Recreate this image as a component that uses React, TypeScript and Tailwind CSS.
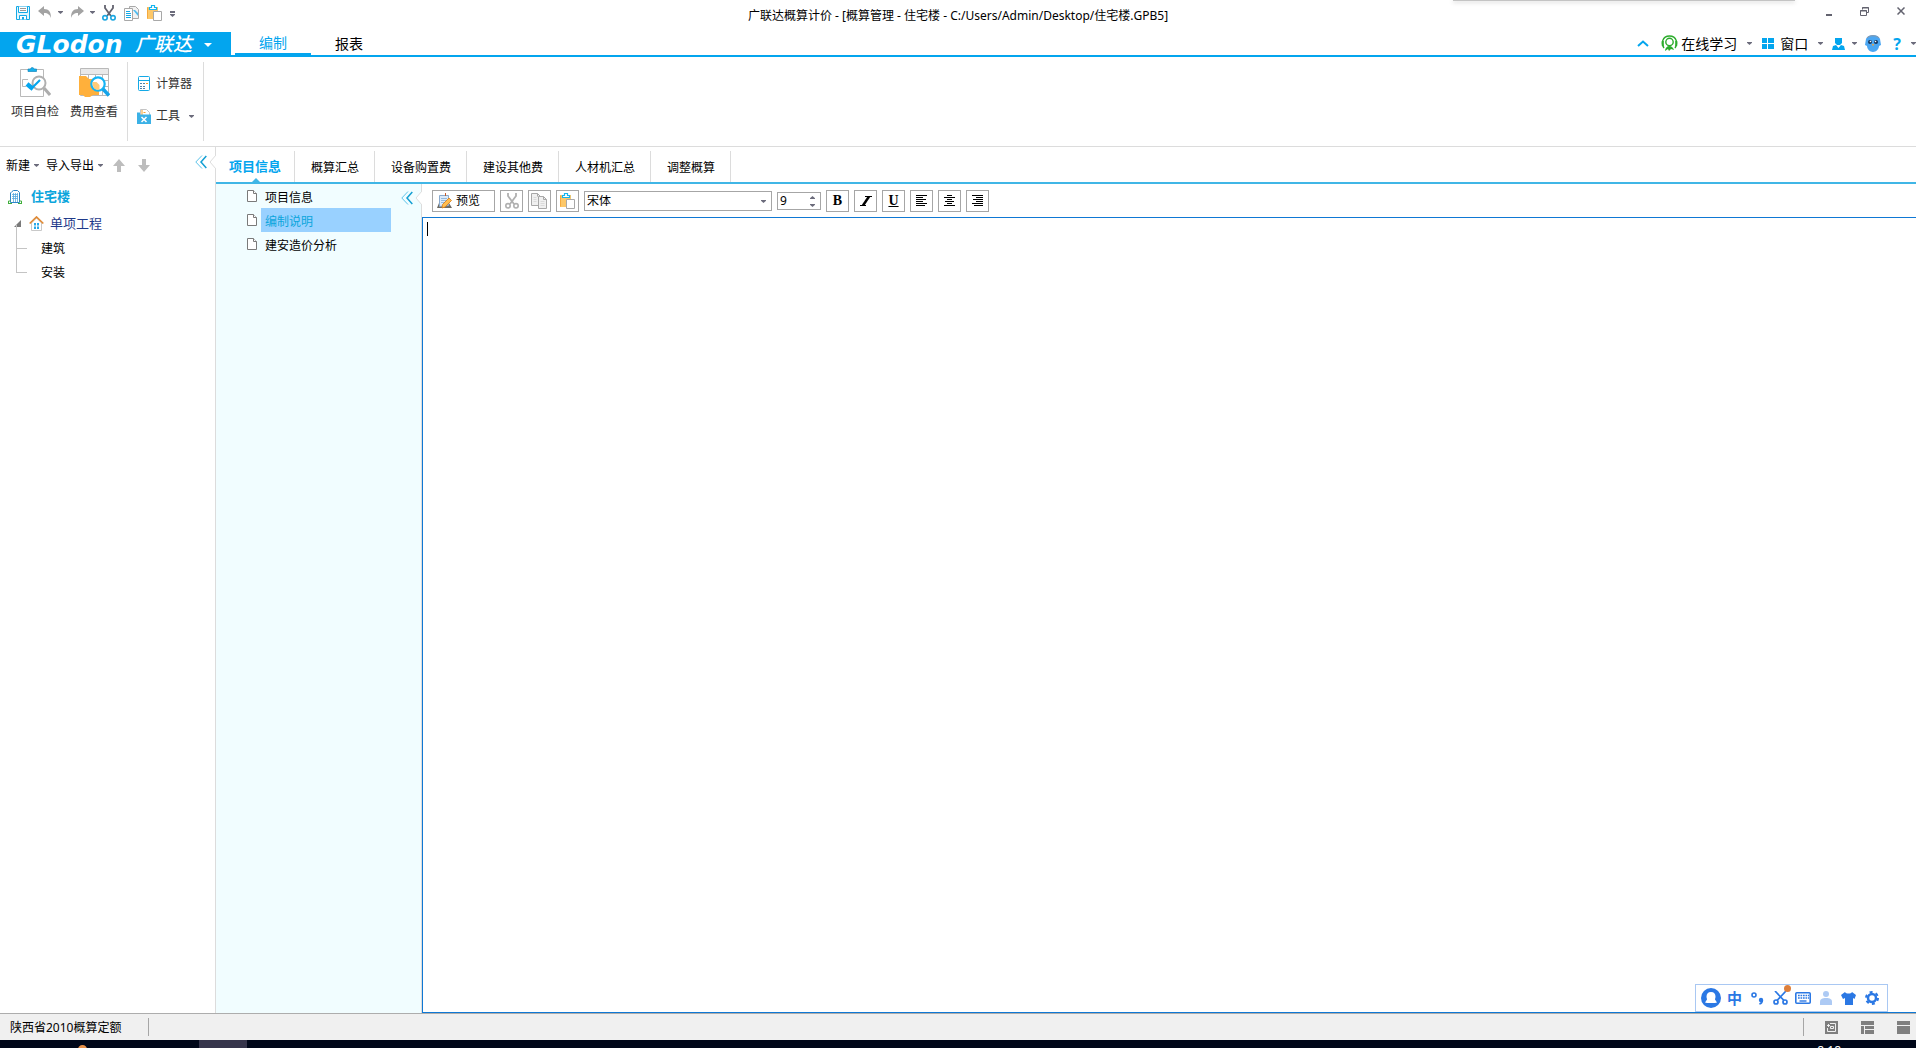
import React from "react";

type IconProps = { className?: string };

const font = "font-['Noto_Sans','Noto_Sans_CJK_SC',sans-serif]";

const Caret = ({ className = "text-[#6b6b7b]" }: IconProps) => (
  <svg className={`shrink-0 ${className}`} width="5" height="3" viewBox="0 0 5 3">
    <path d="M0 0h5v.8L2.500 3 0 .8z" fill="currentColor" />
  </svg>
);

const SaveIcon = () => (
  <svg width="14" height="14" viewBox="0 0 14 14" fill="none" stroke="#14a9e6">
    <path d="M.5.5h13v13H.5z" fill="#e4f6fd" />
    <path d="M2.500.5v6h9v-6M3.500 13.500v-4h7v4" fill="#fff" />
    <path d="M4 2.500h6M4 4.500h6" stroke="#999" />
    <path d="M6 11h2v2.500H6z" fill="#14a9e6" stroke="none" />
  </svg>
);

const UndoIcon = ({ className = "" }: IconProps) => (
  <svg className={className} width="14" height="13" viewBox="0 0 14 13" fill="#a3a3a3">
    <path d="M0 5 6 0v3c5 0 7 3 7 9-1-3-3-5-7-5v3z" />
  </svg>
);

const CutIcon = ({ gray = false }: { gray?: boolean }) => (
  <svg width="14" height="16" viewBox="0 0 14 16" fill="none">
    <path d="M3 0v3l6 8M11 0v3l-6 8" stroke={gray ? "#b0b0b0" : "#63636f"} strokeWidth="1.8" />
    <circle cx="3" cy="12.8" r="2.2" stroke={gray ? "#b0b0b0" : "#1aa6e0"} strokeWidth="1.6" />
    <circle cx="11" cy="12.8" r="2.2" stroke={gray ? "#b0b0b0" : "#1aa6e0"} strokeWidth="1.6" />
  </svg>
);

const CopyIcon = () => (
  <svg width="15" height="15" viewBox="0 0 15 15" fill="none" stroke="#a8a8a8">
    <path d="M5.500.5h6l3 3v9h-9z" fill="#f2f2f2" />
    <path d="M9 4h2l3 3v3z" fill="#4dbcf0" stroke="none" />
    <path d="M.5 2.500h8v12h-8z" fill="#fff" />
    <path d="M2 5.500h4M2 7.500h5M2 9.500h5M2 11.500h5" stroke="#14a9e6" />
  </svg>
);

const GrayCopyIcon = () => (
  <svg width="17" height="16" viewBox="0 0 17 16" fill="#f0f0f0" stroke="#a8a8a8">
    <path d="M.5.5h6l3 3v9h-9z" />
    <path d="M7.500 3.500h5l3 3v9h-8z" />
    <path d="M12.500 3.500v3h3M6.500.5v3" fill="none" />
    <path d="M9.500 8.500h4M9.500 10.500h4M9.500 12.500h4M2.500 4.500h3M2.500 6.500h3M2.500 8.500h3" stroke="#dadada" />
  </svg>
);

const PasteIcon = () => (
  <svg width="15" height="16" viewBox="0 0 15 16" fill="none">
    <path d="M0 2h11v12H0z" fill="#fdc869" />
    <path d="M.5 2.500v11" stroke="#f5a93d" />
    <path d="M2.500 4.500v-2h2v-2h3v2h2v2z" fill="#fff" stroke="#14b4ee" strokeWidth="1.2" />
    <path d="M6.500 6.500h8v9h-8z" fill="#fff" stroke="#a8a8a8" />
  </svg>
);

const CheckProjectIcon = () => (
  <svg width="32" height="32" viewBox="0 0 32 32" fill="none">
    <path d="M1.500 3.500h23v27h-23z" stroke="#b9b9b9" />
    <path d="M9 5.500V3h2.500a1.800 1.800 0 0 1 3.500 0h2.500v2.500z" fill="#14b0ec" stroke="#1687bd" strokeWidth=".7" />
    <path d="M9 13.500H3.500v7H7" stroke="#b9b9b9" />
    <circle cx="20" cy="17" r="6.500" fill="#fff" stroke="#b0b0b0" strokeWidth="2" />
    <path d="m8 18 6 5" stroke="#03a5ee" strokeWidth="4.500" />
    <path d="m14 21 7-7" stroke="#03a5ee" strokeWidth="2.200" />
    <path d="m25 22 6 7" stroke="#adadad" strokeWidth="3" />
  </svg>
);

const FeeIcon = () => (
  <svg width="32" height="32" viewBox="0 0 32 32" fill="none">
    <path d="M2.500 2.500h28v27h-28z" fill="#fff" stroke="#b9b9b9" />
    <path d="M3 3h27v5H3z" fill="#e9e9e9" />
    <path d="M2 8.500h28M2 14.500h28M2 20.500h28M10.500 8v21M17.500 8v21M24.500 8v21" stroke="#b9b9b9" />
    <path d="M1 10h7l3 3h8l2 8v8h-6l-3 2H7l-2-2H1z" fill="#ffb03b" />
    <circle cx="20" cy="18" r="6.700" fill="#fff" stroke="#14b4f5" strokeWidth="2.200" />
    <path d="M14.500 16h4l3 3v4.500c-4 1-7-1-7-7.500z" fill="#ffcb78" />
    <path d="m25 23 6 6.500" stroke="#14a4ea" strokeWidth="3.500" />
  </svg>
);

const CalculatorIcon = () => (
  <svg width="14" height="16" viewBox="0 0 14 16" fill="none">
    <rect x="1.500" y=".5" width="11" height="14" rx="1" fill="#fff" stroke="#14a9e6" />
    <path d="M2 4.500h10" stroke="#14a9e6" />
    <path d="M3 7.500h8M3 10.500h5M3 12.500h5" stroke="#4f80a8" strokeDasharray="2 1" />
    <path d="M9 7.500h2" stroke="#f5a028" />
  </svg>
);

const ToolsIcon = () => (
  <svg width="14" height="15" viewBox="0 0 14 15" fill="none">
    <path d="M3.500.5h6l3 3v6h-9z" fill="#fff" stroke="#c4c4c4" />
    <path d="M5 1v5M6.500 3.500h2" stroke="#f5a028" />
    <path d="M0 3.500h3v2h11V15H0z" fill="#3bb1e6" />
    <path d="m4.500 8 5 5M9.500 8l-5 5" stroke="#fff" strokeWidth="1.500" />
  </svg>
);

const CollapseIcon = () => (
  <svg width="12" height="14" viewBox="0 0 12 14" fill="none">
    <path d="M7 .5.8 7 7 13.500" stroke="#5cc3ea" />
    <path d="M11.300 1 6 7l5.300 6" stroke="#139fd3" strokeWidth="1.500" />
  </svg>
);

const Notch = () => (
  <svg width="7" height="14" viewBox="0 0 7 14" fill="#fff" stroke="#ddd">
    <path d="M7 0 1 7l6 7" />
  </svg>
);

const ArrowIcon = ({ className = "" }: IconProps) => (
  <svg className={className} width="12" height="13" viewBox="0 0 12 13" fill="#bdbdbd">
    <path d="m6 0 6 7H8v6H4V7H0z" />
  </svg>
);

const BuildingIcon = () => (
  <svg width="14" height="14" viewBox="0 0 14 14" fill="none">
    <path d="M2.500 12.500V3L4 1.500 5.500.5h4l2 2v10z" fill="#fff" stroke="#2e86c8" />
    <path d="M5.500 3v9M7.500 3v9M9.500 3v9M4 4.500h6M4 6.500h6M4 8.500h6" stroke="#58a9de" strokeWidth=".8" />
    <path d="M.5 13v-2h2M13.500 13v-2h-2M0 13.500h4M10 13.500h4" stroke="#3fae3a" />
  </svg>
);

const HouseIcon = () => (
  <svg width="15" height="15" viewBox="0 0 15 15" fill="none">
    <path d="M2.500 7v7.500h10V7l-5-5z" fill="#fff" stroke="#c9c9c9" />
    <path d="M.7 7.500 7.500 1l6.800 6.500" stroke="#e08a35" strokeWidth="1.700" />
    <path d="M5 7h2v2.500H5zM8 7h2v2.500H8zM5 10.500h2V13H5zM8 10.500h2V13H8z" fill="#2aa9e8" />
  </svg>
);

const PageIcon = () => (
  <svg className="shrink-0" width="11" height="13" viewBox="0 0 11 13" fill="#fff" stroke="#7a7a7a">
    <path d="M.5.5h6l3 3v8H.5z" />
    <path d="M6.500.5v3h3" />
  </svg>
);

const PreviewIcon = () => (
  <svg width="15" height="16" viewBox="0 0 15 16" fill="none">
    <path d="M2 10h10l3 5H0z" fill="#6c6a63" />
    <path d="M2.500 2.500h9v10l-9 1z" fill="#dceaf8" stroke="#89a9cd" />
    <path d="M4 5.500h6M4 7.500h6M4 9.500h4" stroke="#96b9dd" />
    <path d="M8.500 0v3" stroke="#c65c28" />
    <path d="m12 5 2.500 2.500L8 14l-3 1 .5-3.500z" fill="#ffbd4e" stroke="#d57b18" strokeWidth=".8" />
  </svg>
);

const AlignIcon = ({ align }: { align: "left" | "center" | "right" }) => {
  const paths = {
    left: "M0 .5h11M0 2.500h7M0 4.500h10M0 6.500h7M0 8.500h11M0 10.500h9",
    center: "M3 .5h5M0 2.500h11M3 4.500h5M1 6.500h9M3 8.500h5M0 10.500h11",
    right: "M0 .5h11M4 2.500h7M1 4.500h10M4 6.500h7M0 8.500h11M2 10.500h9",
  };
  return (
    <svg width="11" height="11" viewBox="0 0 11 11" stroke="#000">
      <path d={paths[align]} />
    </svg>
  );
};

const HeadsetIcon = () => (
  <svg width="17" height="17" viewBox="0 0 17 17" fill="none" stroke="#2cac2c">
    <path d="M3 13C0 9 1 1 8.500 1S17 9 14 13" strokeWidth="1.400" />
    <path d="M1.800 6v5M15.200 6v5" strokeWidth="2" />
    <circle cx="8.500" cy="7" r="3.700" strokeWidth="1.400" />
    <path d="M4 16c0-3 2-5 4.500-5 2 0 4 2 4.500 4l-3-1-2 2-1-2z" fill="#2cac2c" stroke="none" />
  </svg>
);

const OwlIcon = () => (
  <svg width="16" height="17" viewBox="0 0 16 17">
    <path d="M1 4C2 1 5 0 8 0s6 1 7 4l1 6-2 1c0 3-3 6-6 6s-6-3-6-6l-2-1z" fill="#4ba6f2" />
    <path d="M2 3c2-3 10-3 12 0" fill="none" stroke="#9098a5" />
    <circle cx="5" cy="7" r="2" fill="#17375e" />
    <circle cx="11" cy="7" r="2" fill="#17375e" />
    <circle cx="5.500" cy="6.500" r=".8" fill="#fff" />
    <circle cx="10.500" cy="6.500" r=".8" fill="#fff" />
    <path d="M7 9h2l-1 2.500z" fill="#f9a233" />
  </svg>
);

const UserIcon = () => (
  <svg width="13" height="13" viewBox="0 0 13 13" fill="#03a5ee">
    <path d="M3 1h7v5L8 8H5L3 6zM0 13l1-4 3-1 2.500 3L9 8l3 1 1 4z" />
  </svg>
);

const tabs = ["项目信息", "概算汇总", "设备购置费", "建设其他费", "人材机汇总", "调整概算"];
const pages = ["项目信息", "编制说明", "建安造价分析"];

const TitleBar = () => (
  <header className="relative flex h-8 items-center justify-center">
    <div className="absolute left-4 top-1 flex h-4 items-center">
      <button aria-label="保存" className="mr-2 mt-[2px]"><SaveIcon /></button>
      <button aria-label="撤销" className="flex items-center gap-[6px]"><UndoIcon /><Caret /></button>
      <button aria-label="恢复" className="ml-[7px] flex items-center gap-[6px]"><UndoIcon className="-scale-x-100" /><Caret /></button>
      <button aria-label="剪切" className="ml-[7px] mt-[2px]"><CutIcon /></button>
      <button aria-label="复制" className="ml-2 mt-[2px]"><CopyIcon /></button>
      <button aria-label="粘贴" className="ml-2 mt-[2px]"><PasteIcon /></button>
      <button aria-label="自定义快速访问" className="ml-2 mt-1 flex flex-col gap-px">
        <span className="h-[2px] w-[5px] bg-[#6b6b7b]" />
        <Caret />
      </button>
    </div>
    <h1 className="text-xs">广联达概算计价 - [概算管理 - 住宅楼 - C:/Users/Admin/Desktop/住宅楼.GPB5]</h1>
    <div className="absolute right-[121px] top-0 h-px w-[342px] bg-[#c4c4c4] shadow-[0_1px_4px_rgba(0,0,0,0.35)]" />
    <div className="absolute right-[11px] top-[6px] flex items-center gap-[28px] text-[#63636f]">
      <button aria-label="最小化" className="pt-2"><svg width="6" height="2" fill="currentColor"><path d="M0 0h6v2H0z" /></svg></button>
      <button aria-label="还原">
        <svg width="9" height="9" viewBox="0 0 9 9" fill="none" stroke="currentColor"><path d="M2.500 2.500v-2h6v5h-2M.5 3.500h6v5h-6zM2 1h7M0 4h7" /></svg>
      </button>
      <button aria-label="关闭"><svg width="8" height="8" viewBox="0 0 8 8" stroke="currentColor" strokeWidth="1.500"><path d="m.5.5 7 7m0-7-7 7" /></svg></button>
    </div>
  </header>
);

const MenuBar = () => (
  <nav className="flex h-[25px] items-stretch border-b-2 border-[#03a5ee] text-sm">
    <button className="-mb-[2px] flex w-[231px] items-center bg-[#03a5ee] pl-4 text-white">
      <span className="w-[119px] text-left font-['DejaVu_Sans',sans-serif] text-[25px] font-bold italic leading-none">GLodon</span>
      <span className="text-[19px] font-medium italic leading-none">广联达</span>
      <svg className="ml-3" width="8" height="4" fill="#fff"><path d="M0 0h8L4 4z" /></svg>
    </button>
    <button className="ml-1 w-[76px] border-b-2 border-[#03a5ee] leading-none text-[#03a5ee]">编制</button>
    <button className="w-[76px] leading-none">报表</button>
    <div className="ml-auto flex items-center">
      <button aria-label="折叠功能区" className="mr-3">
        <svg width="12" height="7" viewBox="0 0 12 7" fill="none" stroke="#03a5ee" strokeWidth="2"><path d="m1 6 5-4.500L11 6" /></svg>
      </button>
      <button className="flex items-center"><HeadsetIcon /><span className="ml-[3px] mr-[10px]">在线学习</span><Caret /></button>
      <button className="ml-[10px] flex items-center">
        <svg width="12" height="11" fill="#03a5ee"><path d="M0 0h5v5H0zM6 0h6v5H6zM0 6h5v5H0zM6 6h6v5H6z" /></svg>
        <span className="ml-[6px] mr-[10px]">窗口</span><Caret />
      </button>
      <button aria-label="用户" className="ml-[9px] flex items-center gap-[7px]"><UserIcon /><Caret /></button>
      <button aria-label="助手" className="ml-2"><OwlIcon /></button>
      <button aria-label="帮助" className="ml-3 flex items-center gap-[10px] text-base font-bold leading-none text-[#03a5ee]">?<Caret /></button>
    </div>
  </nav>
);

const Ribbon = () => (
  <section className="flex h-[90px] border-b border-[#dcdcdc] py-[5px] text-xs text-[#333]">
    <div className="flex border-r border-[#dcdcdc] pl-[11px] pr-[9px]">
      <button className="flex w-12 flex-col items-center pt-1"><CheckProjectIcon /><span className="mt-[6px]">项目自检</span></button>
      <button className="ml-[11px] flex w-12 flex-col items-center pt-1"><FeeIcon /><span className="mt-[6px]">费用查看</span></button>
    </div>
    <div className="flex flex-col items-start gap-4 border-r border-[#dcdcdc] px-[9px] pt-[14px]">
      <button className="flex items-center gap-[5px]"><CalculatorIcon />计算器</button>
      <button className="flex items-center gap-[5px]"><ToolsIcon />工具<span className="pl-1"><Caret /></span></button>
    </div>
  </section>
);

const ProjectTree = () => (
  <aside className="relative w-[216px] shrink-0 border-r border-[#dcdcdc] text-xs">
    <div className="flex h-9 items-center pl-[6px] pt-px">
      <button className="flex items-center gap-1">新建<Caret /></button>
      <button className="ml-[7px] flex items-center gap-1">导入导出<Caret /></button>
      <button aria-label="上移" className="ml-[10px]"><ArrowIcon /></button>
      <button aria-label="下移" className="ml-[13px]"><ArrowIcon className="rotate-180" /></button>
    </div>
    <button aria-label="收起" className="absolute right-2 top-2"><CollapseIcon /></button>
    <span className="absolute -right-px top-2"><Notch /></span>
    <ul>
      <li className="flex h-[27px] items-center gap-[9px] pl-2 text-[13px] font-bold text-[#0ba5dc]"><BuildingIcon />住宅楼</li>
      <li className="flex h-[27px] items-center pl-[14px] text-[13px] text-[#1f3a8a]">
        <svg width="7" height="7" fill="#7a7a7a"><path d="M7 0v7H0z" /></svg>
        <span className="ml-2 mr-[6px]"><HouseIcon /></span>
        单项工程
      </li>
      {["建筑", "安装"].map((name) => (
        <li key={name} className="flex h-6 items-center pl-4">
          <span className="-mt-6 mr-[14px] h-6 w-[11px] border-b border-l border-[#c4c4c4]" />
          {name}
        </li>
      ))}
    </ul>
  </aside>
);

const PageList = () => (
  <aside className="relative w-[206px] shrink-0 border-r border-[#dcdcdc] bg-[#f1fdff] text-xs">
    <ul>
      {pages.map((page) => (
        <li key={page} className="flex h-6 items-center pl-[31px] pr-[30px]">
          <PageIcon />
          <button
            className={
              page === "编制说明"
                ? "ml-[3px] h-6 flex-1 bg-[#99d1ff] pl-1 pt-1 text-left text-[#0ba5dc]"
                : "ml-[3px] h-6 flex-1 pl-1 pt-1 text-left"
            }
          >
            {page}
          </button>
        </li>
      ))}
    </ul>
    <button aria-label="收起" className="absolute right-2 top-[7px]"><CollapseIcon /></button>
    <span className="absolute -right-px top-[7px]"><Notch /></span>
  </aside>
);

const toolButton = "flex h-[22px] w-[23px] items-center justify-center border border-[#a6a6a6] bg-white";

const Editor = () => (
  <main className="flex min-w-0 flex-1 flex-col">
    <div className="flex h-[33px] items-center gap-[5px] pl-[10px] text-xs">
      <button className="flex h-[22px] w-[63px] items-center gap-1 border border-[#a6a6a6] pl-1"><PreviewIcon />预览</button>
      <button aria-label="剪切" className={toolButton}><CutIcon gray /></button>
      <button aria-label="复制" className={toolButton}><GrayCopyIcon /></button>
      <button aria-label="粘贴" className={toolButton}><PasteIcon /></button>
      <div className="relative">
        <select aria-label="字体" className="h-5 w-[188px] appearance-none border border-[#a6a6a6] bg-white pl-[2px] leading-none">
          <option>宋体</option>
        </select>
        <span className="pointer-events-none absolute right-[6px] top-[9px] flex"><Caret /></span>
      </div>
      <div className="relative">
        <input aria-label="字号" defaultValue="9" className="h-[18px] w-[44px] border border-[#a6a6a6] pl-[2px] leading-none" />
        <span className="pointer-events-none absolute right-[6px] top-[4px] flex flex-col gap-[5px]"><span className="flex rotate-180"><Caret /></span><Caret /></span>
      </div>
      <button className={`${toolButton} font-['Liberation_Serif',serif] text-sm font-black`}>B</button>
      <button aria-label="斜体" className={toolButton}>
        <svg width="12" height="10" viewBox="0 0 12 10" stroke="#000"><path d="M5 .5h7M0 9.500h6" /><path d="M9 .5 3 9.500" strokeWidth="2.500" /></svg>
      </button>
      <button className={`${toolButton} font-['Liberation_Serif',serif] text-sm font-bold underline`}>U</button>
      <button aria-label="左对齐" className={toolButton}><AlignIcon align="left" /></button>
      <button aria-label="居中" className={toolButton}><AlignIcon align="center" /></button>
      <button aria-label="右对齐" className={toolButton}><AlignIcon align="right" /></button>
    </div>
    <div className="relative flex flex-1 border border-r-0 border-[#0f78d4]">
      <textarea aria-label="编制说明" className="flex-1 resize-none p-1 text-xs outline-none" />
      <span className="absolute left-1 top-1 h-[14px] w-px bg-black" />
      <ImeBar />
    </div>
  </main>
);

const ImeBar = () => (
  <div className="absolute bottom-0 right-7 flex h-[28px] w-[193px] items-center border border-[#a9c8f3] bg-white pl-[5px] text-[#2b78e4]">
    <svg width="20" height="20" viewBox="0 0 20 20">
      <circle cx="10" cy="10" r="10" fill="currentColor" />
      <path d="M10 4c3 0 4.500 2 4.500 4.500 0 1.500-.5 2-.5 3l2 3-2 .5H6l-2-.5 2-3c0-1-.5-1.500-.5-3C5.500 6 7 4 10 4z" fill="#fff" />
    </svg>
    <span className="ml-[6px] text-[15px] font-bold leading-none">中</span>
    <svg className="ml-[9px]" width="13" height="13" viewBox="0 0 13 13" fill="none" stroke="currentColor" strokeWidth="1.600">
      <circle cx="3" cy="3" r="2" /><circle cx="10" cy="8" r="2.200" fill="currentColor" stroke="none" /><path d="M11.400 8c0 2-1 3.500-3 4" />
    </svg>
    <span className="relative ml-[9px]">
      <svg width="15" height="14" viewBox="0 0 15 14" fill="none" stroke="currentColor" strokeWidth="1.700">
        <path d="m2 0 9 9.500M13 0 4 9.500" /><circle cx="3" cy="11" r="2" /><circle cx="12" cy="11" r="2" />
      </svg>
      <span className="absolute -right-[3px] -top-[6px] h-[7px] w-[7px] rounded-full bg-[#dd7f3b]" />
    </span>
    <svg className="ml-[7px]" width="16" height="12" viewBox="0 0 16 12" fill="none" stroke="currentColor">
      <rect x=".8" y=".8" width="14.400" height="10.400" rx="1" strokeWidth="1.600" />
      <path d="M3 3.500h11M3 6h11" strokeWidth="1.500" strokeDasharray="1.700 .8" /><path d="M4.500 9h7" strokeWidth="1.400" />
    </svg>
    <svg className="ml-[9px]" width="12" height="14" viewBox="0 0 12 14" fill="#adcaf4"><circle cx="6" cy="3" r="3" /><path d="M0 14v-3c0-3 2-4 6-4s6 1 6 4v3z" /></svg>
    <svg className="ml-[9px]" width="15" height="13" viewBox="0 0 15 13" fill="currentColor"><path d="M4 0c1 2 6 2 7 0l4 3-1.500 4-1.500-1v7H4V6L2 7 0 3z" /></svg>
    <svg className="ml-[9px]" width="14" height="14" viewBox="0 0 14 14" fill="none" stroke="currentColor">
      <circle cx="7" cy="7" r="4" strokeWidth="2.500" /><circle cx="7" cy="7" r="6" strokeWidth="2" strokeDasharray="3 3.280" />
    </svg>
  </div>
);

const StatusBar = () => (
  <footer className="flex h-[27px] items-center border-t border-[#adadad] bg-[#f0f0f0] text-xs">
    <span className="w-[148px] pl-[10px] pt-[2px]">陕西省2010概算定额</span>
    <span className="h-[18px] w-px bg-[#a6a6a6]" />
    <span className="ml-auto h-[18px] w-px bg-[#a6a6a6]" />
    <div className="flex gap-[23px] pl-[21px] pr-[6px]">
      <button aria-label="视图一"><svg width="13" height="13" viewBox="0 0 13 13" fill="none" stroke="#f0f0f0"><path d="M0 0h13v13H0z" fill="#7f7f7f" stroke="none" /><path d="M5 2.500h5.500v8h-8V7M2 4.500h3M3.500 3v3M5.500 5.500h3v2h-3z" /></svg></button>
      <button aria-label="视图二"><svg width="13" height="13" fill="#7f7f7f"><path d="M0 0h13v4H0zM0 5h3v8H0zM4 5h9v3H4zM4 9h9v4H4z" /></svg></button>
      <button aria-label="视图三"><svg width="13" height="13" fill="#7f7f7f"><path d="M0 0h13v4H0zM0 5h13v8H0z" /></svg></button>
    </div>
  </footer>
);

const TaskBar = () => (
  <div className="flex h-2 items-start overflow-hidden bg-[#000719]">
    <span className="ml-[78px] mt-[5px] h-[9px] w-[9px] shrink-0 rounded-full bg-[#e8914a]" />
    <span className="ml-[112px] h-2 w-12 bg-[#36354b]" />
    <span className="ml-auto mr-[75px] mt-[3px] text-xs text-white">8:18</span>
  </div>
);

export default function App() {
  return (
    <div className={`flex h-screen flex-col overflow-hidden bg-white text-black ${font}`}>
      <TitleBar />
      <MenuBar />
      <Ribbon />
      <div className="flex min-h-0 flex-1">
        <ProjectTree />
        <div className="flex min-w-0 flex-1 flex-col">
          <div className="flex h-[37px] items-stretch border-b-2 border-[#40b6e6] pt-1 text-xs">
            {tabs.map((tab, i) => (
              <button
                key={tab}
                className={
                  i === 0
                    ? "relative border-r border-[#dcdcdc] px-[13px] text-[13px] font-bold text-[#03a5ee]"
                    : "border-r border-[#dcdcdc] pl-4 pr-[15px] pt-[2px]"
                }
              >
                {tab}
                {i === 0 && (
                  <svg className="absolute bottom-0 left-9" width="8" height="4" fill="#40b6e6"><path d="m4 0 4 4H0z" /></svg>
                )}
              </button>
            ))}
          </div>
          <div className="flex min-h-0 flex-1">
            <PageList />
            <Editor />
          </div>
        </div>
      </div>
      <StatusBar />
      <TaskBar />
    </div>
  );
}
